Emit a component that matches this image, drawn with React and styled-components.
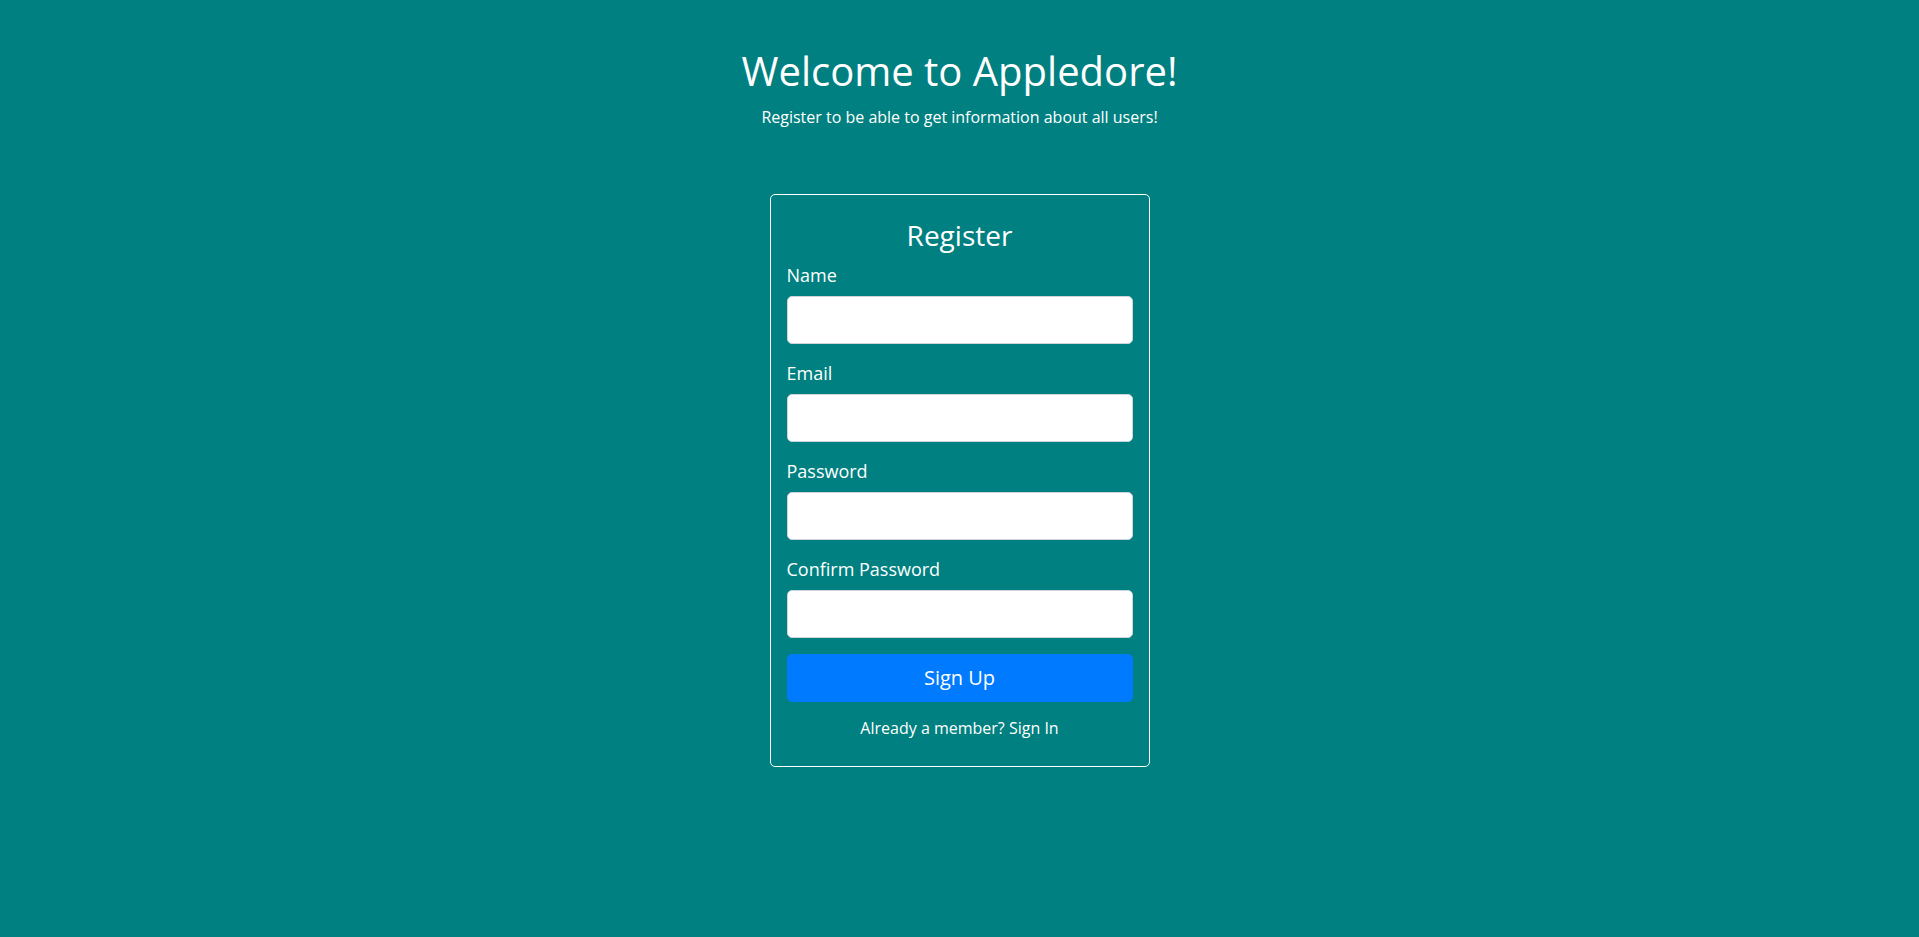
import React from "react";
import styled, { createGlobalStyle } from "styled-components";

const GlobalStyle = createGlobalStyle`
  * {
    box-sizing: border-box;
  }
  body {
    margin: 0;
    background-color: #008080;
    color: #ffffff;
    font-family: "Open Sans", "Liberation Sans", sans-serif;
  }
`;

// style
const Wrapper = styled.div`
  min-height: 100vh;
  padding-top: 47px;
  display: flex;
  flex-direction: column;
  align-items: center;
  text-align: center;
`;
const Title = styled.h1`
  margin: 0 0 10px;
  font-size: 40px;
  font-weight: 400;
  line-height: 1.2;
`;
const Lead = styled.p`
  margin: 0;
  font-size: 16px;
  line-height: 1.5;
`;
const Card = styled.form`
  width: 380px;
  margin-top: 65px;
  padding: 24px 16px 26px;
  display: flex;
  flex-direction: column;
  border: 1px solid #ffffff;
  border-radius: 5px;
  text-align: left;
`;
const CardTitle = styled.h3`
  margin: 0 0 9px;
  font-size: 28px;
  font-weight: 400;
  line-height: 1.2;
  text-align: center;
`;
const Group = styled.div`
  display: flex;
  flex-direction: column;
  gap: 7px;
  margin-bottom: 16px;
`;
const Label = styled.label`
  font-size: 18px;
  line-height: 1.5;
`;
const Input = styled.input`
  width: 100%;
  height: 48px;
  padding: 8px 16px;
  font-family: inherit;
  font-size: 20px;
  color: #495057;
  background: #ffffff;
  border: 1px solid #ced4da;
  border-radius: 5px;
  outline: none;
`;
const Button = styled.button`
  width: 100%;
  height: 48px;
  padding: 8px 16px;
  font-family: inherit;
  font-size: 20px;
  line-height: 1.5;
  color: #ffffff;
  background: #007bff;
  border: 1px solid #007bff;
  border-radius: 5px;
  cursor: pointer;
`;
const Footer = styled.p`
  margin: 14px 0 0;
  font-size: 16px;
  line-height: 1.5;
  text-align: center;
`;
const SignInLink = styled.a`
  color: #ffffff;
  text-decoration: none;
`;

const fields = [
  { id: "name", label: "Name", type: "text" },
  { id: "email", label: "Email", type: "email" },
  { id: "password", label: "Password", type: "password" },
  { id: "confirm", label: "Confirm Password", type: "password" },
];

export default function App() {
  return (
    <>
      <GlobalStyle />
      <Wrapper>
        <Title>Welcome to Appledore!</Title>
        <Lead>Register to be able to get information about all users!</Lead>
        <Card onSubmit={(e) => e.preventDefault()}>
          <CardTitle>Register</CardTitle>
          {fields.map((f) => (
            <Group key={f.id}>
              <Label htmlFor={f.id}>{f.label}</Label>
              <Input id={f.id} type={f.type} />
            </Group>
          ))}
          <Button type="submit">Sign Up</Button>
          <Footer>
            Already a member? <SignInLink href="#">Sign In</SignInLink>
          </Footer>
        </Card>
      </Wrapper>
    </>
  );
}
